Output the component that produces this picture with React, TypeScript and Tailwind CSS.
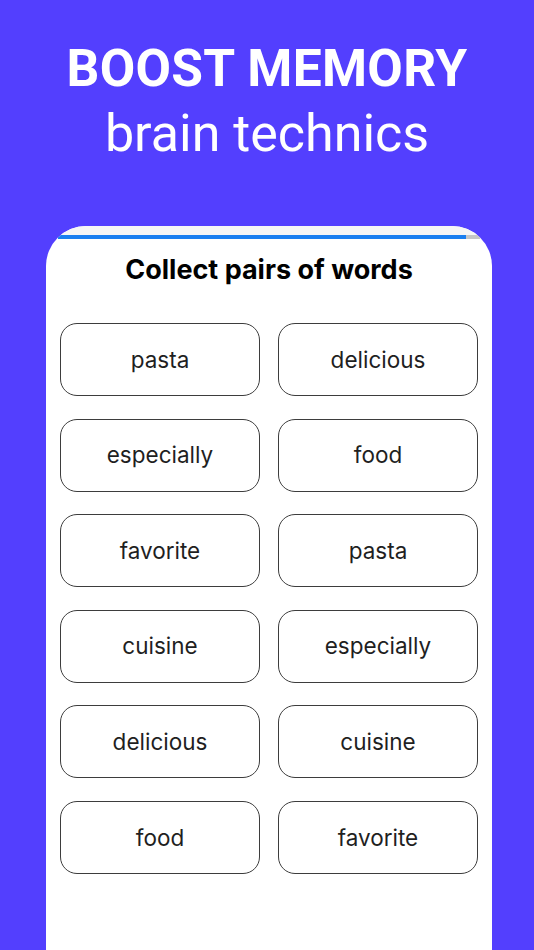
import React from "react";

const left = ["pasta", "especially", "favorite", "cuisine", "delicious", "food"];
const right = ["delicious", "food", "pasta", "especially", "cuisine", "favorite"];

const WordButton = ({ word }: { word: string }) => (
  <button className="h-[73px] rounded-[17px] border border-[#3d3d3d] bg-white text-[22.5px] text-[#1f1f1f]">
    {word}
  </button>
);

export default function App() {
  return (
    <div className="h-[950px] w-[534px] overflow-hidden bg-[#533ffe] flex flex-col font-['Inter',sans-serif]">
      {/* Header */}
      <div className="pt-[38px] flex flex-col items-center text-white font-['Roboto',sans-serif]">
        <h1 className="text-[51.5px] font-bold leading-[62px] tracking-[0.3px]">BOOST MEMORY</h1>
        <p className="text-[52px] leading-[62px] mt-[3px]">brain technics</p>
      </div>

      {/* Card */}
      <div className="mt-[61px] ml-[46px] w-[446px] flex-1 bg-white rounded-t-[40px] overflow-hidden">
        <div className="h-[9px] bg-[#f6f6f6]" />
        <div className="flex h-[4px] px-[12px]">
          <div className="w-[408px] bg-[#1a7ff0]" />
          <div className="w-[14px] bg-[#c6c6c6]" />
        </div>
        <h2 className="mt-[15px] text-center text-[27px] font-bold text-black leading-[32px]">
          Collect pairs of words
        </h2>
        <div className="mt-[37px] px-[14px] grid grid-cols-2 gap-x-[18px] gap-y-[22.6px]">
          {left.map((w, i) => (
            <React.Fragment key={i}>
              <WordButton word={w} />
              <WordButton word={right[i]} />
            </React.Fragment>
          ))}
        </div>
      </div>
    </div>
  );
}
